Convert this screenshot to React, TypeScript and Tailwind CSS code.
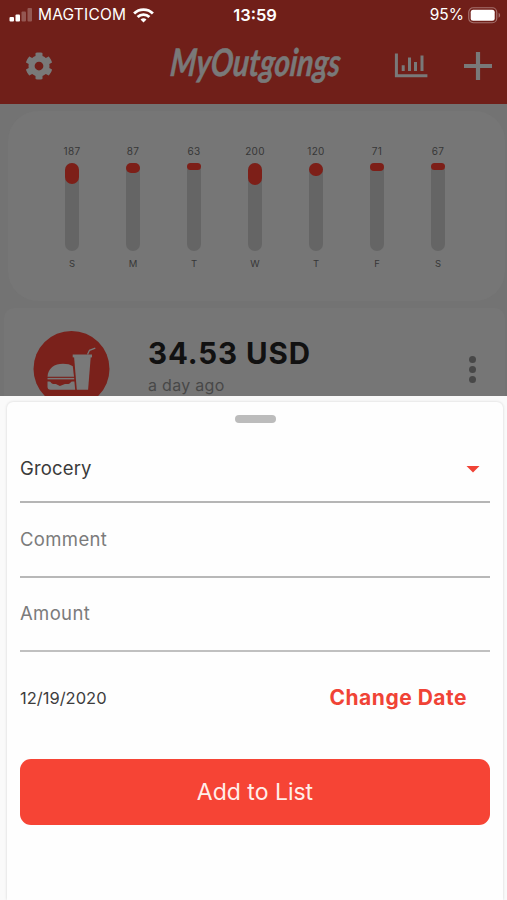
import React, { useState } from 'react';
import { FaCog } from 'react-icons/fa';

type Day = {
  label: string;
  amount: number;
};

const week: Day[] = [
  { label: 'S', amount: 187 },
  { label: 'M', amount: 87 },
  { label: 'T', amount: 63 },
  { label: 'W', amount: 200 },
  { label: 'T', amount: 120 },
  { label: 'F', amount: 71 },
  { label: 'S', amount: 67 },
];

const total = week.reduce((sum, d) => sum + d.amount, 0);

function StatusBar() {
  return (
    <div className="grid h-[30px] grid-cols-[1fr_auto_1fr] items-center pl-[9px] pr-[6px] text-white">
      <div className="flex items-center">
        <svg width="24" height="14" viewBox="0 0 24 14" fill="#fff">
          <rect x="0.5" y="9" width="4.5" height="4.5" rx="1" />
          <rect x="6.5" y="6.5" width="4.5" height="7" rx="1" />
          <rect x="12.5" y="3.5" width="4.5" height="10" rx="1" opacity="0.25" />
          <rect x="18.5" y="0" width="4.5" height="13.5" rx="1" opacity="0.25" />
        </svg>
        <span className="ml-[5px] w-[89px] text-[15.5px] leading-none tracking-[0.2px]">MAGTICOM</span>
        <svg className="ml-[6px]" width="21" height="15" viewBox="0 0 21 15" fill="none" stroke="#fff" strokeWidth="2.8">
          <path d="M1.1 5.6a13.3 13.3 0 0 1 18.8 0" />
          <path d="M4.6 9.1a8.3 8.3 0 0 1 11.8 0" />
          <path d="M10.5 14.6 7.5 11.6a4.3 4.3 0 0 1 6 0z" fill="#fff" stroke="none" />
        </svg>
      </div>
      <span className="text-[16.5px] font-semibold leading-none">13:59</span>
      <div className="flex items-center justify-end">
        <span className="text-[15.5px] leading-none">95%</span>
        <svg className="ml-[4px]" width="33" height="17" viewBox="0 0 33 17" fill="none">
          <rect x="0.75" y="0.75" width="28" height="15" rx="4.5" stroke="#a5716d" strokeWidth="1.2" />
          <rect x="2.7" y="2.8" width="24" height="10.9" rx="2.5" fill="#fff" />
          <path d="M30.6 5.8v5c2-.7 2-4.3 0-5z" fill="#a5716d" />
        </svg>
      </div>
    </div>
  );
}

function Header({ onAdd }: { onAdd: () => void }) {
  return (
    <div className="flex h-[74px] items-start pl-[25px] pr-[14px]">
      <button className="mt-[22px]">
        <FaCog size={28} color="#797979" />
      </button>
      {/* brand word mark */}
      <svg className="ml-[114px] mt-[2px] overflow-visible" width="178" height="66" viewBox="0 0 178 66">
        <text
          x="2"
          y="44"
          transform="translate(5 0) skewX(-6)"
          textLength="170"
          lengthAdjust="spacingAndGlyphs"
          fill="#797979"
          stroke="#797979"
          strokeWidth="0.5"
          fontFamily="Lato, sans-serif"
          fontStyle="italic"
          fontWeight="700"
          fontSize="38"
        >
          MyOutgoings
        </text>
      </svg>
      <svg className="ml-[49px] mt-[23px]" width="34" height="26" viewBox="0 0 34 26" fill="none" stroke="#797979">
        <path d="M2.4 .5v22.3h31" strokeWidth="3" />
        <path d="M9.2 12.3v5.7M15.5 4.5v13.5M21.5 9v9M28 2.5v15.5" strokeWidth="3" />
      </svg>
      <button className="ml-auto mt-[21px]" onClick={onAdd}>
        <svg width="30" height="30" viewBox="0 0 30 30" fill="none" stroke="#797979" strokeWidth="4.2">
          <path d="M15 1v28M1 15h28" />
        </svg>
      </button>
    </div>
  );
}

function Chart() {
  return (
    <div className="ml-[8px] mr-[2px] mt-[7px] flex h-[190px] justify-between rounded-[30px] bg-[#767676] pl-[44px] pr-[47px] pt-[34px]">
      {week.map((d, i) => (
        <div key={i} className="flex w-[40px] flex-col items-center text-[#363636]">
          <span className="text-[10px] leading-[12px] tracking-[0.3px]">{d.amount}</span>
          <div className="mt-[6px] h-[88px] w-[14px] rounded-full bg-[#656565]">
            <div className="w-full rounded-full bg-[#7d1f18]" style={{ height: `${(d.amount / total) * 100}%` }} />
          </div>
          <span className="mt-[7px] text-[9.5px] leading-[12px]">{d.label}</span>
        </div>
      ))}
    </div>
  );
}

function Expense() {
  return (
    <div className="ml-[4px] mr-[2px] mt-[7px] flex h-[122px] items-start rounded-t-[10px] bg-[#767676]">
      <svg className="ml-[29px] mt-[22px]" width="77" height="77" viewBox="0 0 77 77">
        <circle cx="38.5" cy="38.9" r="38" fill="#7a211b" />
        <g fill="#797979">
          <path d="M14.5 46.8c.3-8.500 7-13 15.500-13 4.200 0 7.500.8 9.800 2.500l1.200 10.500z" />
          <path d="M14.500 47.900h26.700v1.500H14.500z" />
          <path d="M14.500 51.500h1.600c2 0 2 2.400 4 2.400h2.800l4 2 5-2h3.500c2 0 2-2.400 4-2.400h2l.8 8.300H17.500c-2 0-3-1-3-3z" />
          <path d="M41 26h16.800l-2.700 33.700H43.800z" />
          <path d="M39.700 24.500h19.300v2.900H39.700z" />
        </g>
        <path d="M54.500 24.500l2-4.200 5.800-2.100" fill="none" stroke="#797979" strokeWidth="1.3" />
      </svg>
      <div className="ml-[38px] mt-[28px] flex flex-col">
        <span className="text-[29.5px] font-bold leading-[34px] tracking-[0.9px] text-[#111111]">34.53 USD</span>
        <span className="mt-[5px] text-[16px] leading-[20px] tracking-[0.3px] text-[#484848]">a day ago</span>
      </div>
      <button className="ml-auto mr-[29px] mt-[48px] flex flex-col gap-[3px]">
        <span className="size-[7px] rounded-full bg-[#484848]" />
        <span className="size-[7px] rounded-full bg-[#484848]" />
        <span className="size-[7px] rounded-full bg-[#484848]" />
      </button>
    </div>
  );
}

export default function App() {
  const [comment, setComment] = useState('');
  const [amount, setAmount] = useState('');
  const [sheetOpen, setSheetOpen] = useState(true);

  return (
    <div className="flex h-[900px] w-[507px] flex-col overflow-hidden bg-[#737373] font-['Inter',sans-serif]">
      <div className="h-[104px] shrink-0 bg-[#701f19]">
        <StatusBar />
        <Header onAdd={() => setSheetOpen(true)} />
      </div>
      <div className="h-[292px] shrink-0 overflow-hidden">
        <Chart />
        <Expense />
      </div>

      {sheetOpen && (
        <div className="flex-1 bg-[#fafafa] pl-[7px] pr-[4px] pt-[6px]">
          <div className="flex h-full flex-col rounded-t-[6px] bg-[#fefefe] pl-[13px] pr-[13px] shadow-[0_0_3px_rgba(0,0,0,0.16)]">
            <button
              className="mx-auto mt-[13px] h-[8px] w-[41px] shrink-0 rounded-full bg-[#bcbcbc]"
              onClick={() => setSheetOpen(false)}
            />
            <button className="mt-[13px] flex h-[67px] items-center justify-between border-b-2 border-[#b5b5b5] pr-[10px]">
              <span className="text-[18.5px] tracking-[0.15px] text-[#3a3a3a]">Grocery</span>
              <svg width="14" height="8" viewBox="0 0 14 8" fill="#f04336">
                <path d="M.5 1h13L7 7.500z" />
              </svg>
            </button>
            <input
              value={comment}
              onChange={e => setComment(e.target.value)}
              placeholder="Comment"
              className="h-[75px] w-full border-b-2 border-[#b8b8b8] pb-[2px] text-[18.5px] tracking-[0.35px] outline-none placeholder:text-[#7b7b7b]"
            />
            <input
              value={amount}
              onChange={e => setAmount(e.target.value)}
              placeholder="Amount"
              className="h-[74px] w-full border-b-2 border-[#c0c0c0] pb-[2px] text-[18.5px] tracking-[0.35px] outline-none placeholder:text-[#7b7b7b]"
            />
            <div className="mt-[30px] flex h-[32px] items-center justify-between pr-[23px]">
              <span className="text-[16.5px] text-[#3d3d3d]">12/19/2020</span>
              <button className="text-[21px] font-bold tracking-[0.5px] text-[#f04336]">Change Date</button>
            </div>
            <button className="mt-[45px] h-[66px] rounded-[11px] bg-[#f64435] text-[23px] text-[#ffeeea]">
              Add to List
            </button>
          </div>
        </div>
      )}
    </div>
  );
}
